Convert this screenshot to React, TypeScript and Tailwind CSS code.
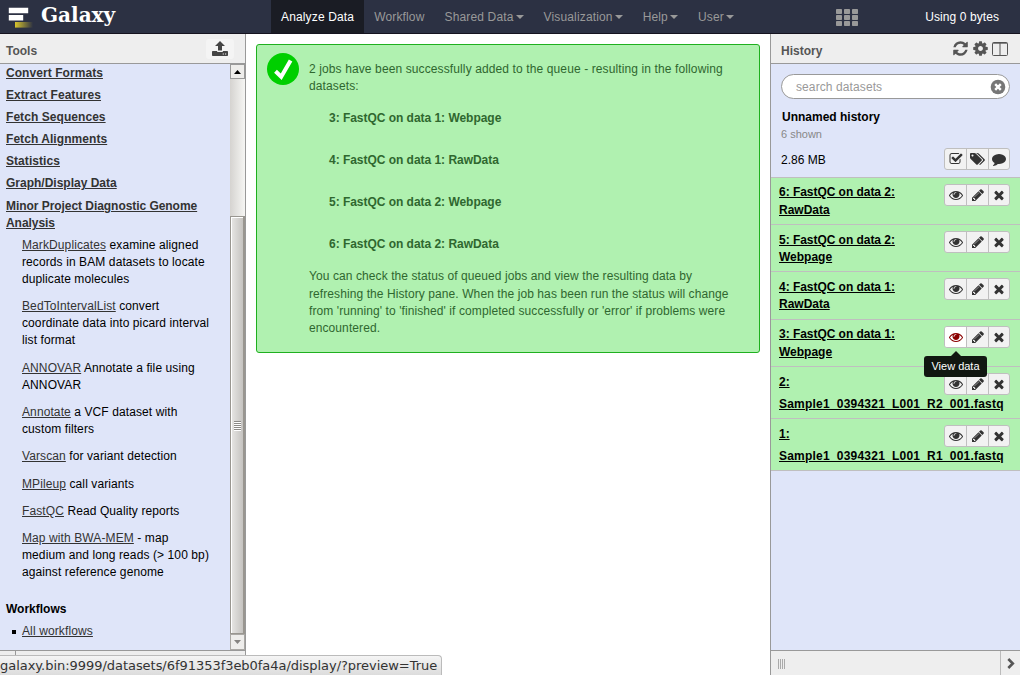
import React from "react";

const P = {
  eye: "M1664 960q-152-236-381-353 61 104 61 225 0 185-131.5 316.5t-316.5 131.5-316.5-131.5-131.5-316.5q0-121 61-225-229 117-381 353 133 205 333.5 326.5t434.5 121.5 434.5-121.5 333.5-326.5zm-720-384q0-20-14-34t-34-14q-125 0-214.5 89.5t-89.5 214.5q0 20 14 34t34 14 34-14 14-34q0-86 61-147t147-61q20 0 34-14t14-34zm848 384q0 34-20 69-140 230-376.5 368.5t-499.5 138.5-499.5-139-376.5-368q-20-35-20-69t20-69q140-229 376.5-368t499.5-139 499.5 139 376.5 368q20 35 20 69z",
  pencil: "M491 1536l91-91-235-235-91 91v107h128v128h107zm523-928q0-22-22-22-10 0-17 7l-542 542q-7 7-7 17 0 22 22 22 10 0 17-7l542-542q7-7 7-17zm-54-192l416 416-832 832h-416v-416zm683 96q0 53-37 90l-166 166-416-416 166-165q36-38 90-38 53 0 91 38l235 234q37 39 37 91z",
  times: "M1490 1322q0 40-28 68l-136 136q-28 28-68 28t-68-28l-294-294-294 294q-28 28-68 28t-68-28l-136-136q-28-28-28-68t28-68l294-294-294-294q-28-28-28-68t28-68l136-136q28-28 68-28t68 28l294 294 294-294q28-28 68-28t68 28l136 136q28 28 28 68t-28 68l-294 294 294 294q28 28 28 68z",
  check: "M1472 930v318q0 119-84.5 203.5t-203.5 84.5h-832q-119 0-203.5-84.5t-84.5-203.5v-832q0-119 84.5-203.5t203.5-84.5h832q63 0 117 25 15 7 18 23 3 17-9 29l-49 49q-10 10-23 10-3 0-9-2-23-6-45-6h-832q-66 0-113 47t-47 113v832q0 66 47 113t113 47h832q66 0 113-47t47-113v-254q0-13 9-22l64-64q10-10 23-10 6 0 12 3 20 8 20 29zm231-489l-814 814q-24 24-57 24t-57-24l-430-430q-24-24-24-57t24-57l110-110q24-24 57-24t57 24l263 263 647-647q24-24 57-24t57 24l110 110q24 24 24 57t-24 57z",
  tags: "M448 448q0-53-37.5-90.5t-90.5-37.5-90.5 37.5-37.5 90.5 37.5 90.5 90.5 37.5 90.5-37.5 37.5-90.5zm1067 576q0 53-37 90l-491 492q-39 37-91 37-53 0-90-37l-715-716q-38-37-64.5-101t-26.5-117v-416q0-52 38-90t90-38h416q53 0 117 26.5t102 64.5l715 714q37 39 37 91zm384 0q0 53-37 90l-491 492q-39 37-91 37-36 0-59-14t-53-45l470-470q37-37 37-90 0-52-37-91l-715-714q-38-38-102-64.5t-117-26.5h224q53 0 117 26.5t102 64.5l715 714q37 39 37 91z",
  comment: "M1792 896q0 174-120 321.5t-326 233-450 85.5q-70 0-145-8-198 175-460 242-49 14-114 22-17 2-30.5-9t-17.5-29v-1q-3-4-.5-12t2-10 4.5-9.5l6-9 7-8.5 8-9q7-8 31-34.5t34.5-38 31-39.5 32.5-51 27-59 26-76q-157-89-247.5-220t-90.5-281q0-130 71-248.5t191-204.5 286-136.5 348-50.5q244 0 450 85.5t326 233 120 321.5z",
  refresh: "M1639 1056q0 5-1 7-64 268-268 434.5t-478 166.5q-146 0-282.5-55t-243.5-157l-129 129q-19 19-45 19t-45-19-19-45v-448q0-26 19-45t45-19h448q26 0 45 19t19 45-19 45l-137 137q71 66 161 102t187 36q134 0 250-65t186-179q11-17 53-117 8-23 30-23h192q13 0 22.5 9.5t9.5 22.5zm25-800v448q0 26-19 45t-45 19h-448q-26 0-45-19t-19-45 19-45l138-138q-148-137-349-137-134 0-250 65t-186 179q-11 17-53 117-8 23-30 23h-199q-13 0-22.5-9.5t-9.5-22.5v-7q65-268 270-434.5t480-166.5q146 0 284 55.5t245 156.5l130-129q19-19 45-19t45 19 19 45z",
  cog: "M1152 896q0-106-75-181t-181-75-181 75-75 181 75 181 181 75 181-75 75-181zm512-109v222q0 12-8 23t-20 13l-185 28q-19 54-39 91 35 50 107 138 10 12 10 25t-9 23q-27 37-99 108t-94 71q-12 0-26-9l-138-108q-44 23-91 38-16 136-29 186-7 28-36 28h-222q-14 0-24.5-8.5t-11.5-21.5l-28-184q-49-16-90-37l-141 107q-10 9-25 9-14 0-25-11-126-114-165-168-7-10-7-23 0-12 8-23 15-21 51-66.5t54-70.5q-27-50-41-99l-183-27q-13-2-21-12.5t-8-23.5v-222q0-12 8-23t19-13l186-28q14-46 39-92-40-57-107-138-10-12-10-24 0-10 9-23 26-36 98.5-107.5t94.5-71.5q13 0 26 10l138 107q44-23 91-38 16-136 29-186 7-28 36-28h222q14 0 24.5 8.5t11.5 21.5l28 184q49 16 90 37l142-107q9-9 24-9 13 0 25 10 129 119 165 170 7 8 7 22 0 12-8 23-15 21-51 66.5t-54 70.5q26 50 41 98l183 28q13 2 21 12.5t8 23.5z",
};

function Icon({ d, className, box = "0 0 1792 1792" }: { d: string; className: string; box?: string }) {
  return (
    <svg viewBox={box} className={className} fill="currentColor">
      <path d={d} />
    </svg>
  );
}

function NavItem({ label, caret, active }: { label: string; caret?: boolean; active?: boolean }) {
  return (
    <div className={`flex h-[33px] items-center px-[10px] pt-[2px] tracking-[0.15px] ${active ? "bg-[#1a1c24] text-white" : "text-[#999]"}`}>
      <span>{label}</span>
      {caret && (
        <svg viewBox="0 0 8 4" className="mb-[1px] ml-[2px] h-[4px] w-[8px]" fill="currentColor">
          <path d="M0 0h8L4 4z" />
        </svg>
      )}
    </div>
  );
}

const sections = ["Convert Formats", "Extract Features", "Fetch Sequences", "Fetch Alignments", "Statistics", "Graph/Display Data", "Minor Project Diagnostic Genome Analysis"];

const tools = [
  ["MarkDuplicates", "examine aligned records in BAM datasets to locate duplicate molecules"],
  ["BedToIntervalList", "convert coordinate data into picard interval list format"],
  ["ANNOVAR", "Annotate a file using ANNOVAR"],
  ["Annotate", "a VCF dataset with custom filters"],
  ["Varscan", "for variant detection"],
  ["MPileup", "call variants"],
  ["FastQC", "Read Quality reports"],
  ["Map with BWA-MEM", "- map medium and long reads (> 100 bp) against reference genome"],
];

function ToolsPanel() {
  return (
    <aside className="flex w-[246px] shrink-0 flex-col border-r border-[#999]">
      <div className="flex h-[30px] shrink-0 items-center justify-between border-b border-[#999] bg-[#eee] pl-[6px] pr-[11px]">
        <b className="pt-[6px] text-[#555]">Tools</b>
        <div className="flex h-[20px] w-[28px] items-center justify-center rounded-[3px] bg-[#f4f4f4] text-[#444]">
          <svg viewBox="0 0 16 15" className="h-[15px] w-[16px]" fill="currentColor">
            <path d="M8 0l5 5H10v4.5H6V5H3z" />
            <path fillRule="evenodd" d="M.8 10H5.2v1h5.6v-1h4.4q.8 0 .8.8v3.4q0 .8-.8.8H.8q-.8 0-.8-.8v-3.4Q0 10 .8 10zM10.7 12.5v1h1.2v-1zm2.3 0v1h1.2v-1z" />
          </svg>
        </div>
      </div>
      <div className="flex h-[586px] shrink-0 bg-[#dfe5f9]">
        <div className="w-[230px] pl-[6px] pt-[0.5px]">
          {sections.map((s, i) => (
            <div key={s} className={`w-[205px] font-bold text-[#333] underline ${i < 5 ? "mb-[5px] tracking-[0.06px]" : i === 5 ? "mb-[5.7px]" : "mb-[4.3px] tracking-[-0.05px]"}`}>{s}</div>
          ))}
          {tools.map(([name, text]) => (
            <div key={name} className="mb-[10.1px] ml-[16px] w-[192px] tracking-[0.1px]">
              <span className="text-[#333] underline">{name}</span> {text}
            </div>
          ))}
          <b className="mt-[19.5px] block">Workflows</b>
          <div className="mt-[5px] flex items-center pl-[6px]">
            <i className="mr-[6px] h-[4px] w-[4px] bg-black" />
            <span className="tracking-[0.12px] text-[#333] underline">All workflows</span>
          </div>
        </div>
        <div className="flex w-[15px] flex-col bg-linear-to-r from-[#d5d3d0] to-[#f6f6f4]">
          <div className="flex h-[15px] items-center justify-center border border-[#999] bg-[#eeedeb]">
            <svg viewBox="0 0 7 4" className="h-[4px] w-[7px]"><path d="M0 4L3.5 0 7 4z" /></svg>
          </div>
          <div className="mt-[137px] flex h-[418px] items-center justify-center border border-r-2 border-[#999690] bg-linear-to-r from-[#e8e7e5] to-[#c5c3c0] shadow-[inset_1px_1px_0_#fff]">
            <div className="flex flex-col gap-[1px]">
              {[0, 1, 2, 3, 4].map((i) => <i key={i} className="h-[1px] w-[7px] bg-[#8c8a87] shadow-[0_1px_0_#fff]" />)}
            </div>
          </div>
          <div className="flex h-[16px] items-center justify-center border border-[#aaa8a4] bg-[#eeedeb]">
            <svg viewBox="0 0 7 4" className="h-[4px] w-[7px]" fill="#858380"><path d="M0 0L3.5 4 7 0z" /></svg>
          </div>
        </div>
      </div>
      <div className="flex flex-1 border-t border-[#999] bg-[#eee]"><div className="w-[16px] border-r border-[#999]" /></div>
    </aside>
  );
}

function Buttons({ icons, hot, children }: { icons: React.ReactNode[]; hot?: boolean; children?: React.ReactNode }) {
  return (
    <div className="relative flex h-[22px] w-[66px] shrink-0 rounded-[3px] border border-[#bfbfbf] bg-[#f2f2f2] text-[#333]">
      {icons.map((icon, i) => (
        <div key={i} className={`flex items-center justify-center border-[#bfbfbf] pb-[1px] ${i < 2 ? "w-[22px] border-r" : "w-[20px]"} ${hot && i === 0 ? "rounded-l-[2px] bg-white text-[#8b0000]" : ""}`}>{icon}</div>
      ))}
      {children}
    </div>
  );
}

const items = [
  { a: "6: FastQC on data 2:", b: "RawData", h: "h-[47px]" },
  { a: "5: FastQC on data 2:", b: "Webpage", h: "h-[47px]", low: true },
  { a: "4: FastQC on data 1:", b: "RawData", h: "h-[48px]", low: true },
  { a: "3: FastQC on data 1:", b: "Webpage", h: "h-[47px]", hot: true },
  { a: "2:", b: "Sample1_0394321_L001_R2_001.fastq", h: "h-[52px]", long: true, low: true },
  { a: "1:", b: "Sample1_0394321_L001_R1_001.fastq", h: "h-[52px]", long: true, low: true },
];

function HistoryPanel() {
  return (
    <aside className="flex w-[250px] shrink-0 flex-col border-l border-[#999] bg-[#dfe5f9]">
      <div className="flex h-[30px] shrink-0 items-center border-b border-[#999] bg-[#eee] pl-[10px] pr-[12px] text-[#555]">
        <b className="flex-1 pt-[6px]">History</b>
        <Icon d={P.refresh} className="mr-[3px] h-[17px] w-[17px]" />
        <Icon d={P.cog} className="mr-[3px] h-[17px] w-[17px]" />
        <svg viewBox="0 0 16 14" className="h-[14px] w-[16px]" fill="none" stroke="currentColor">
          <rect x=".5" y=".5" width="15" height="13" rx="1" />
          <path d="M1 1.2h14M8 1v12" />
        </svg>
      </div>
      <div className="h-[113px] shrink-0 px-[10px] pt-[10px]">
        <div className="flex h-[25px] w-[229px] items-center justify-between rounded-full border border-[#999] bg-white pl-[14px] pr-[3px] text-[#999]">
          <span className="pt-[2px] tracking-[0.1px]">search datasets</span>
          <svg viewBox="0 0 16 16" className="h-[16px] w-[16px]">
            <circle cx="8" cy="8" r="7.3" fill="#777" />
            <path d="M5.2 5.2l5.6 5.6m0-5.6l-5.6 5.6" stroke="#fff" strokeWidth="2.4" />
          </svg>
        </div>
        <b className="mt-[10px] block pl-[1px]">Unnamed history</b>
        <div className="text-[11px] text-[#888]">6 shown</div>
        <div className="mt-[5px] flex w-[229px] items-center justify-between">
          <span className="pt-[2px]">2.86 MB</span>
          <Buttons icons={[
            <Icon d={P.check} className="h-[14px] w-[14px]" />,
            <Icon d={P.tags} box="0 0 1920 1792" className="h-[14px] w-[15px]" />,
            <Icon d={P.comment} className="h-[14px] w-[14px]" />,
          ]} />
        </div>
      </div>
      <div className="border-t border-[#bfbfbf]">
        {items.map((it) => (
          <div key={it.a} className={`${it.h} flex flex-col border-b border-[#bfbfbf] bg-[#b0f1b0] pl-[8px] pr-[10px] pt-[6px] font-bold`}>
            <div className={`flex shrink-0 justify-between ${it.long ? "h-[23px]" : "h-[17.5px]"}`}>
              <span className={`tracking-[-0.04px] underline ${it.low ? "pt-[1px]" : ""}`}>{it.a}</span>
              <Buttons hot={it.hot} icons={[
                <Icon d={P.eye} className="h-[14px] w-[14px]" />,
                <Icon d={P.pencil} className="h-[14px] w-[14px]" />,
                <Icon d={P.times} className="h-[14px] w-[14px]" />,
              ]}>
                {it.hot && (
                  <div className="absolute left-[-21px] top-[24px] z-10 flex w-[63px] flex-col items-center font-normal">
                    <svg viewBox="0 0 10 5" className="h-[5px] w-[10px]" fill="#111711"><path d="M0 5l5-5 5 5z" /></svg>
                    <div className="flex h-[21px] w-[63px] items-center justify-center rounded-[3px] bg-[#111711] text-[11px] text-white">View data</div>
                  </div>
                )}
              </Buttons>
            </div>
            <div className={`whitespace-nowrap underline ${it.long ? "tracking-[0.22px]" : ""}`}>{it.b}</div>
          </div>
        ))}
      </div>
      <div className="mt-auto flex h-[25px] shrink-0 justify-between border-t border-[#999] bg-[#eee]">
        <div className="ml-[7px] mt-[8px] flex h-[10px] gap-[1px]">
          {[0, 1, 2, 3].map((i) => <i key={i} className="w-[1px] bg-[#aaa]" />)}
        </div>
        <div className="flex w-[20px] items-center justify-center border-l border-[#bbb]">
          <svg viewBox="0 0 8 11" className="h-[11px] w-[8px]" fill="none" stroke="#555" strokeWidth="2.6"><path d="M1.3 1l4.5 4.5L1.3 10" /></svg>
        </div>
      </div>
    </aside>
  );
}

export default function App() {
  return (
    <div className="relative flex h-[675px] w-[1020px] flex-col overflow-hidden bg-white font-['Liberation_Sans',Arial,sans-serif] text-[12px] leading-[17.14px] text-black">
      <header className="flex h-[34px] shrink-0 border-b border-[#15131f] bg-[#2c3143]">
        <div className="flex w-[271px] pl-[8px]">
          <svg viewBox="0 0 26 22" className="mt-[7px] h-[22px] w-[26px]">
            <defs><linearGradient id="g"><stop offset="0" stopColor="#d9c52c" /><stop offset="1" stopColor="#2c3143" /></linearGradient></defs>
            <path d="M.8 .8h19.4v5.4H.8zM.8 8h14.4v5.4H.8z" fill="#fff" />
            <path d="M7 15h18v5.6H7z" fill="url(#g)" />
          </svg>
          <span className="ml-[7px] mt-[3px] font-['DejaVu_Serif',serif] text-[20px] font-bold leading-[24px] text-white">Galaxy</span>
        </div>
        <nav className="flex flex-1">
          <NavItem label="Analyze Data" active />
          <NavItem label="Workflow" />
          <NavItem label="Shared Data" caret />
          <NavItem label="Visualization" caret />
          <NavItem label="Help" caret />
          <NavItem label="User" caret />
        </nav>
        <svg viewBox="0 0 22 17" className="mr-[67px] mt-[9px] h-[17px] w-[22px]" fill="#999">
          {[0, 6, 12].map((y) => [0, 8, 16].map((x) => <rect key={`${x}-${y}`} x={x} y={y} width="6" height="5" rx=".7" />))}
        </svg>
        <span className="mr-[21px] mt-[9px] tracking-[0.08px] text-white">Using 0 bytes</span>
      </header>
      <div className="flex min-h-0 flex-1">
        <ToolsPanel />
        <main className="min-w-0 flex-1 px-[10px] pt-[10px]">
          <div className="flex h-[309px] w-[504px] rounded-[3px] border border-[#1fb01f] bg-[#b0f1b0] pl-[10px] pt-[8px] text-[#2f672f]">
            <svg viewBox="0 0 32 32" className="mr-[10px] h-[32px] w-[32px] shrink-0">
              <circle cx="16" cy="16" r="16" fill="#00cf00" />
              <path d="M8.5 18.2l5.7 5.5L23.6 7.5" fill="none" stroke="#fff" strokeWidth="4" />
            </svg>
            <div className="w-[430px] pt-[8px] leading-[17.4px]">
              <p className="tracking-[0.115px]">2 jobs have been successfully added to the queue - resulting in the following datasets:</p>
              <div className="mt-[14px] flex flex-col gap-[24.6px] pl-[20px] font-bold tracking-[-0.03px]">
                <div>3: FastQC on data 1: Webpage</div>
                <div>4: FastQC on data 1: RawData</div>
                <div>5: FastQC on data 2: Webpage</div>
                <div>6: FastQC on data 2: RawData</div>
              </div>
              <p className="mt-[15px] tracking-[0.085px]">You can check the status of queued jobs and view the resulting data by refreshing the History pane. When the job has been run the status will change from 'running' to 'finished' if completed successfully or 'error' if problems were encountered.</p>
            </div>
          </div>
        </main>
        <HistoryPanel />
      </div>
      <div className="absolute bottom-0 left-0 h-[20px] w-[442px] whitespace-nowrap rounded-tr-[4px] border-r border-t border-[#bbb] bg-linear-to-b from-[#f5f5f5] to-[#dcdcdc] font-['DejaVu_Sans',sans-serif] text-[13px] leading-[20px] tracking-[-0.04px] text-[#333]">galaxy.bin:9999/datasets/6f91353f3eb0fa4a/display/?preview=True</div>
    </div>
  );
}
